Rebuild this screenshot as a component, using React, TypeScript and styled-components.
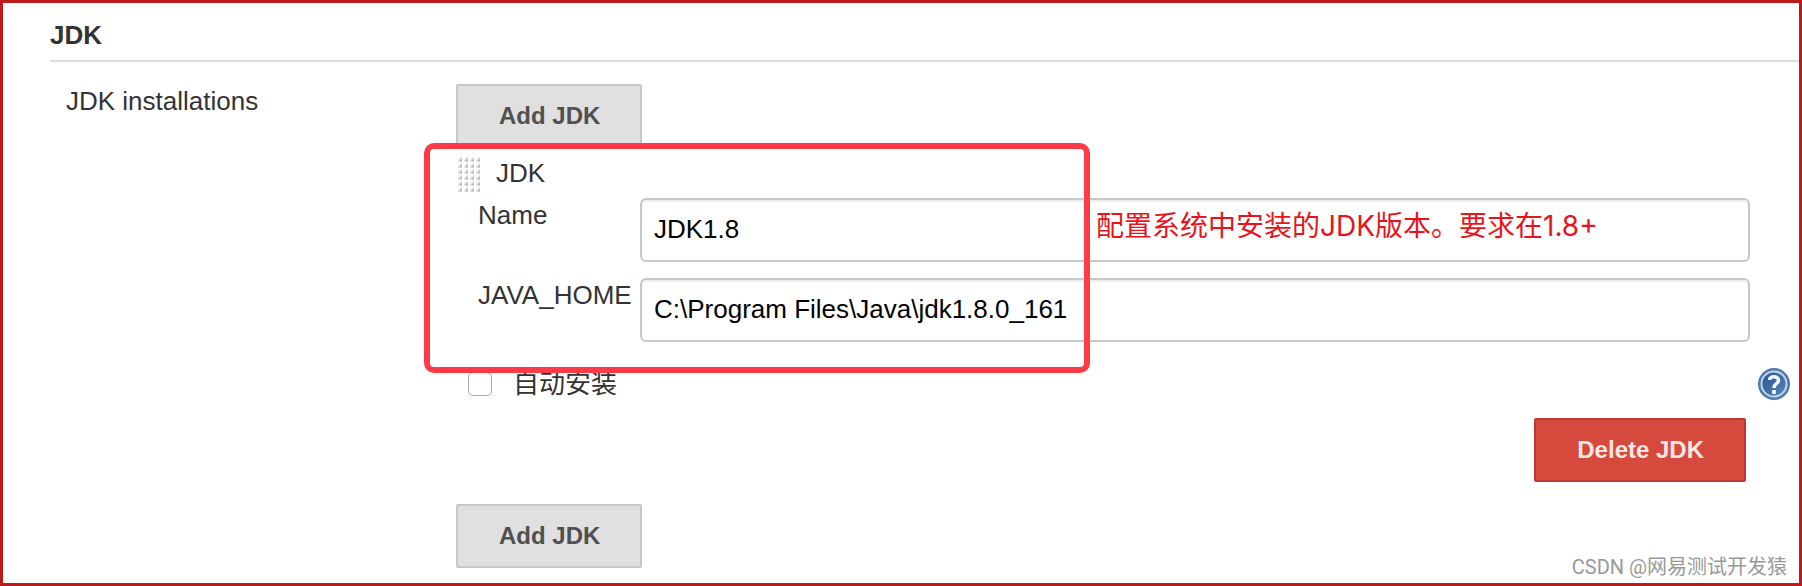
import React from "react";
import styled, { createGlobalStyle } from "styled-components";

const GlobalStyle = createGlobalStyle`
  *, *::before, *::after { box-sizing: border-box; }
  body {
    margin: 0;
    background: #fff;
    color: #333;
    font: 26px/34px "Liberation Sans", "Noto Sans CJK SC", sans-serif;
  }
`;

const Page = styled.main`
  position: relative;
  min-height: 100vh;
  border: 3px solid #bd1a1a;
  padding: 15px 0 15px 47px;
`;

const Heading = styled.h1`
  margin: 0;
  padding-bottom: 8px;
  border-bottom: 2px solid #ddd;
  font-size: 26px;
  line-height: 34px;
`;

const Setting = styled.section`
  display: grid;
  grid-template-columns: 390px minmax(0, 1fr);
  padding: 22px 9px 0 16px;
`;

const SettingName = styled.h2`
  margin: 0;
  font-size: 26px;
  font-weight: 400;
`;

const Button = styled.button<{ $danger?: boolean }>`
  display: block;
  height: 64px;
  padding: 0 40px 0 41px;
  border: 2px solid ${(p) => (p.$danger ? "#b73b32" : "#c8c8c8")};
  border-radius: 2px;
  background: ${(p) => (p.$danger ? "#d54a3c" : "#e0e0e0")};
  color: ${(p) => (p.$danger ? "#fbe6e4" : "#505050")};
  font: bold 24px/32px "Liberation Sans", sans-serif;
`;

const Installation = styled.div`
  position: relative;
  padding: 8px 0 22px;
`;

const Title = styled.div`
  display: flex;
  gap: 16px;
  padding-left: 2px;
  margin-bottom: 8px;
`;

const Grip = styled.svg`
  width: 22px;
  height: 36px;
  margin-bottom: -2px;
`;

const Fields = styled.div`
  display: grid;
  gap: 16px;
  padding: 0 40px 0 22px;
`;

const Field = styled.div`
  position: relative;
  display: grid;
  grid-template-columns: 162px minmax(0, 1fr);
`;

const TextBox = styled.input`
  width: 100%;
  height: 64px;
  padding: 0 12px 2px;
  border: 2px solid #c8c8c8;
  border-radius: 6px;
  box-shadow: inset 0 2px 2px #eee;
  background: #fff;
  color: #000;
  font: 26px/34px "Liberation Sans", sans-serif;
`;

const Note = styled.span`
  position: absolute;
  left: 618px;
  top: 8px;
  color: #e8141c;
  font: 28px/40px Inter, "Noto Sans CJK SC", sans-serif;
  white-space: nowrap;
`;

const AutoInstall = styled.div`
  display: flex;
  align-items: center;
  height: 32px;
  margin: 26px 0 18px;
  padding-left: 12px;
`;

const CheckBox = styled.input`
  appearance: none;
  width: 24px;
  height: 24px;
  margin: 0 21px 0 0;
  border: 1px solid #aaa;
  border-radius: 5px;
  background: #fff;
`;

const Help = styled.button`
  width: 32px;
  height: 32px;
  margin-left: auto;
  padding: 0;
  border: 0;
  background: none;

  svg { display: block; }
`;

const Actions = styled.div`
  display: flex;
  justify-content: flex-end;
  padding-right: 44px;
`;

const Highlight = styled.div`
  position: absolute;
  left: -32px;
  top: -5px;
  width: 666px;
  height: 230px;
  border: 6px solid #fc3a48;
  border-radius: 10px;
  pointer-events: none;
`;

const Watermark = styled.span`
  position: absolute;
  right: 12px;
  bottom: 2px;
  color: #999;
  font: 20px/28px Roboto, "Noto Sans CJK SC", sans-serif;
`;

function DragGrip() {
  return (
    <Grip viewBox="0 0 22 36" aria-hidden="true">
      <defs>
        <pattern id="dots" width="6" height="6" patternUnits="userSpaceOnUse">
          <path d="M0 5.5V4L3 1H4V5.5Z" fill="#e0e0e0" />
          <path d="M1 5.5L4 2.5V5.5Z" fill="#b4b4b4" />
        </pattern>
      </defs>
      <rect width="22" height="36" fill="url(#dots)" />
    </Grip>
  );
}

function HelpIcon() {
  return (
    <svg width="32" height="32" viewBox="0 0 32 32" aria-hidden="true">
      <defs>
        <linearGradient id="disc" x1="0" y1="0" x2="1" y2="1">
          <stop offset="0" stopColor="#245293" />
          <stop offset="1" stopColor="#5b86bb" />
        </linearGradient>
      </defs>
      <circle cx="16" cy="16" r="16" fill="#5279ab" />
      <circle cx="16" cy="16" r="12.5" fill="url(#disc)" stroke="#c3d2e5" strokeWidth="2" />
      <path d="M11.5 12C11.5 7.5 20.5 7.5 20.5 12.5C20.5 15.5 16 15.5 16 20" fill="none" stroke="#f4f7fb" strokeWidth="3.5" />
      <rect x="14" y="22" width="4" height="4" rx="1" fill="#f4f7fb" />
    </svg>
  );
}

export default function App() {
  return (
    <>
      <GlobalStyle />
      <Page>
        <Heading>JDK</Heading>
        <Setting>
          <SettingName>JDK installations</SettingName>
          <div>
            <Button type="button">Add JDK</Button>
            <Installation>
              <Title>
                <DragGrip />
                <span>JDK</span>
              </Title>
              <Fields>
                <Field>
                  <label htmlFor="name">Name</label>
                  <TextBox id="name" defaultValue="JDK1.8" />
                  <Note>配置系统中安装的JDK版本。要求在1.8+</Note>
                </Field>
                <Field>
                  <label htmlFor="home">JAVA_HOME</label>
                  <TextBox id="home" defaultValue="C:\Program Files\Java\jdk1.8.0_161" />
                </Field>
              </Fields>
              <AutoInstall>
                <CheckBox type="checkbox" id="auto" />
                <label htmlFor="auto">自动安装</label>
                <Help type="button" aria-label="Help">
                  <HelpIcon />
                </Help>
              </AutoInstall>
              <Actions>
                <Button type="button" $danger>Delete JDK</Button>
              </Actions>
              <Highlight />
            </Installation>
            <Button type="button">Add JDK</Button>
          </div>
        </Setting>
        <Watermark>CSDN @网易测试开发猿</Watermark>
      </Page>
    </>
  );
}
